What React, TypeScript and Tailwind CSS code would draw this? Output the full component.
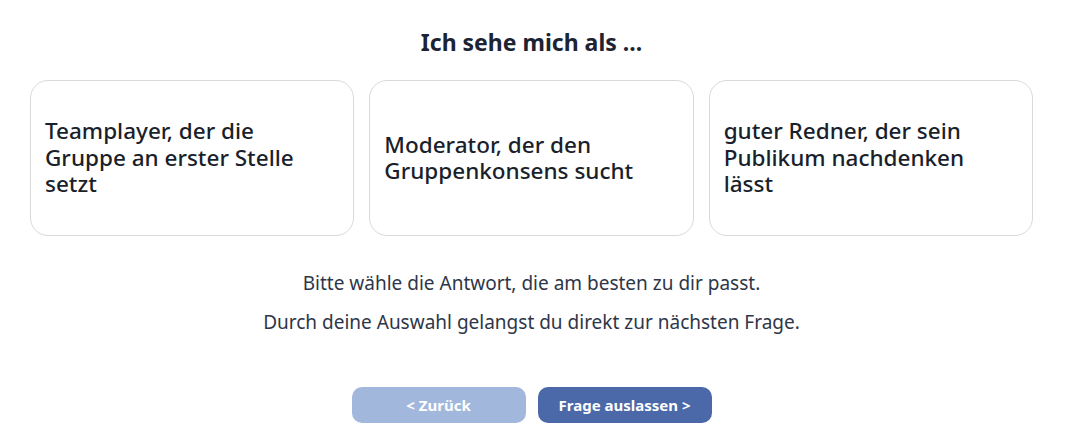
import React from "react";

const font = { fontFamily: '"Noto Sans", "Open Sans", Arial, sans-serif' };

export default function App() {
  const options = [
    "Teamplayer, der die Gruppe an erster Stelle setzt",
    "Moderator, der den Gruppenkonsens sucht",
    "guter Redner, der sein Publikum nachdenken lässt",
  ];
  return (
    <div className="w-full bg-white pl-[30px] pr-[33px] pt-[26px] text-[#1f2a3c]" style={font}>
      <h1 className="text-center text-[23px] font-bold leading-[32px] text-[#1c2333]">Ich sehe mich als ...</h1>
      <div className="mt-[22px] grid grid-cols-3 gap-[15px]">
        {options.map((o) => (
          <button
            key={o}
            className="flex h-[156px] items-center rounded-[18px] border border-[#d9d9d9] bg-white px-[14px] text-left text-[22.5px] font-medium leading-[26.5px] text-[#1a1f2b]"
          >
            <span className="pr-[36px]">{o}</span>
          </button>
        ))}
      </div>
      <p className="mt-[34px] text-center text-[19px] leading-[26px] text-[#2e3648]">
        Bitte wähle die Antwort, die am besten zu dir passt.
      </p>
      <p className="mt-[13px] text-center text-[19px] leading-[26px] text-[#2e3648]">
        Durch deine Auswahl gelangst du direkt zur nächsten Frage.
      </p>
      <div className="mt-[52px] flex justify-center gap-[12px]">
        <button className="h-[36px] w-[174px] rounded-[10px] bg-[#a2b7dc] text-[15px] font-bold text-white">
          &lt; Zurück
        </button>
        <button className="h-[36px] w-[174px] rounded-[10px] bg-[#4b68a8] text-[15px] font-bold text-white">
          Frage auslassen &gt;
        </button>
      </div>
    </div>
  );
}
